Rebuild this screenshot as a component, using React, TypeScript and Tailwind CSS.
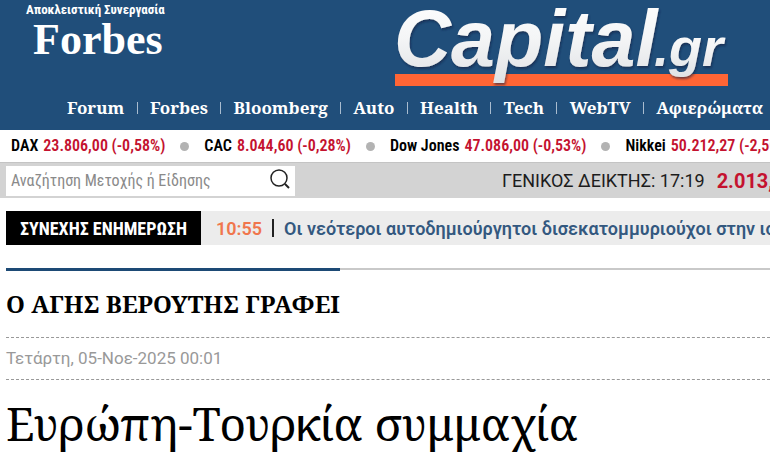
import React from 'react';

interface Quote {
  name: string;
  value: string;
}

const navItems = ['Forum', 'Forbes', 'Bloomberg', 'Auto', 'Health', 'Tech', 'WebTV', 'Αφιερώματα'];

const quotes: Quote[] = [
  { name: 'DAX', value: '23.806,00 (-0,58%)' },
  { name: 'CAC', value: '8.044,60 (-0,28%)' },
  { name: 'Dow Jones', value: '47.086,00 (-0,53%)' },
  { name: 'Nikkei', value: '50.212,27 (-2,50%)' },
];

const CapitalLogo: React.FC = () => (
  <svg
    width="336"
    height="90"
    viewBox="0 0 336 90"
    role="img"
    aria-label="Capital.gr"
    className="overflow-visible"
  >
    <defs>
      <linearGradient id="silver" x1="0" y1="0" x2="0" y2="1">
        <stop offset="0" stopColor="#ffffff" />
        <stop offset="0.5" stopColor="#f4f5f6" />
        <stop offset="1" stopColor="#dfe1e4" />
      </linearGradient>
      <filter id="shade" x="-5%" y="-5%" width="110%" height="115%">
        <feDropShadow dx="1" dy="2" stdDeviation="1" floodColor="#0b2440" floodOpacity="0.6" />
      </filter>
    </defs>
    <rect x="2" y="74" width="333" height="12" fill="#ff6535" />
    <g
      fill="url(#silver)"
      filter="url(#shade)"
      className="font-['Liberation_Sans',sans-serif] font-bold italic"
    >
      <text x="1" y="66" fontSize="79">Capital</text>
      <text x="261" y="66" fontSize="54">.gr</text>
    </g>
  </svg>
);

const Header: React.FC = () => (
  <header className="bg-[#204e7a] text-white">
    <div className="flex h-[90px] items-start justify-between pr-[41px]">
      <a href="#forbes" className="flex flex-col pl-[26px] pt-[2px]">
        <span className="font-['Roboto_Condensed','Liberation_Sans_Narrow',sans-serif] text-[13px] font-bold leading-4">
          Αποκλειστική Συνεργασία
        </span>
        <span className="pl-[7px] font-['Liberation_Serif',serif] text-[44px] font-bold leading-[44px]">
          Forbes
        </span>
      </a>
      <a href="#home">
        <CapitalLogo />
      </a>
    </div>
    <nav className="flex h-10 items-center justify-between pb-1 pl-[67px] pr-[7px] font-['Noto_Serif','DejaVu_Serif_Condensed','DejaVu_Serif',serif] text-[17px] font-bold">
      {navItems.map((item, i) => (
        <React.Fragment key={item}>
          {i > 0 && <span className="h-3 w-px bg-[#a9bccf]" />}
          <a href={`#${item}`}>{item}</a>
        </React.Fragment>
      ))}
    </nav>
  </header>
);

const Ticker: React.FC = () => (
  <ul className="flex h-8 items-center overflow-hidden whitespace-nowrap pl-[11px] font-['Roboto_Condensed','Liberation_Sans_Narrow',sans-serif] text-[16px] font-semibold">
    {quotes.map((quote, i) => (
      <li key={quote.name} className="flex shrink-0 items-center">
        {i > 0 && <span className="mx-[15px] size-[9px] rounded-full bg-[#b3b3b3]" />}
        <span className="mr-[5px] text-black">{quote.name}</span>
        <span className="text-[#c4122f]">{quote.value}</span>
      </li>
    ))}
  </ul>
);

const SearchBar: React.FC = () => (
  <div className="flex h-9 items-center justify-between overflow-hidden border-t border-[#c4c4c4] bg-[#d3d3d3] pl-1.5">
    <form className="flex h-[30px] w-[289px] shrink-0 items-center bg-white pl-[5px] pr-1">
      <input
        type="text"
        aria-label="Αναζήτηση"
        placeholder="Αναζήτηση Μετοχής ή Είδησης"
        className="min-w-0 flex-1 font-['Roboto_Condensed','Liberation_Sans_Narrow',sans-serif] text-[16px] outline-none placeholder:text-[#8a8a8a]"
      />
      <button type="button" aria-label="Αναζήτηση" className="pb-1">
        <svg width="22" height="22" viewBox="0 0 22 22" fill="none" stroke="#222" strokeWidth="1.5">
          <circle cx="10" cy="10" r="8" />
          <path d="M16 16l4 4" strokeWidth="2" />
        </svg>
      </button>
    </form>
    <div className="flex w-[268px] shrink-0 items-center gap-3 whitespace-nowrap font-['Roboto',sans-serif]">
      <span className="text-[18px] text-[#1c1c1c]">ΓΕΝΙΚΟΣ ΔΕΙΚΤΗΣ: 17:19</span>
      <span className="text-[20px] font-bold text-[#c4122f]">2.013,62</span>
    </div>
  </div>
);

const BreakingNews: React.FC = () => (
  <div className="ml-1.5 mt-[13px] flex h-[34px] items-center overflow-hidden whitespace-nowrap bg-[#ececec] font-['Roboto',sans-serif] text-[18px]">
    <h2 className="flex h-full w-[195px] shrink-0 items-center justify-center bg-black font-['Roboto_Condensed','Liberation_Sans_Narrow',sans-serif] font-bold text-white">
      ΣΥΝΕΧΗΣ ΕΝΗΜΕΡΩΣΗ
    </h2>
    <time className="ml-[15px] font-semibold text-[#f0764d]">10:55</time>
    <span className="mx-[10px] h-[18px] w-[2px] shrink-0 bg-[#222]" />
    <a href="#news" className="font-semibold text-[#33587f]">
      Οι νεότεροι αυτοδημιούργητοι δισεκατομμυριούχοι στην ιστορία
    </a>
  </div>
);

const Article: React.FC = () => (
  <main className="ml-1.5 mt-[23px] font-['Noto_Serif','DejaVu_Serif_Condensed','DejaVu_Serif',serif] text-black">
    <div className="flex border-t-2 border-[#c9c9c9]">
      <h2 className="-mt-0.5 border-t-[3px] border-[#1d4a75] pt-[17px] text-[24px] font-bold leading-8">
        Ο ΑΓΗΣ ΒΕΡΟΥΤΗΣ ΓΡΑΦΕΙ
      </h2>
    </div>
    <p className="mt-[17px] border-y border-dashed border-[#999] py-2 font-['Roboto',sans-serif] text-[17px] leading-[25px] text-[#999]">
      Τετάρτη, 05-Νοε-2025 00:01
    </p>
    <h1 className="mt-3 whitespace-nowrap text-[46px] leading-[62px]">Ευρώπη-Τουρκία συμμαχία</h1>
  </main>
);

const App: React.FC = () => {
  return (
    <div className="overflow-hidden bg-white pb-4">
      <Header />
      <Ticker />
      <SearchBar />
      <BreakingNews />
      <Article />
    </div>
  );
};

export default App;
